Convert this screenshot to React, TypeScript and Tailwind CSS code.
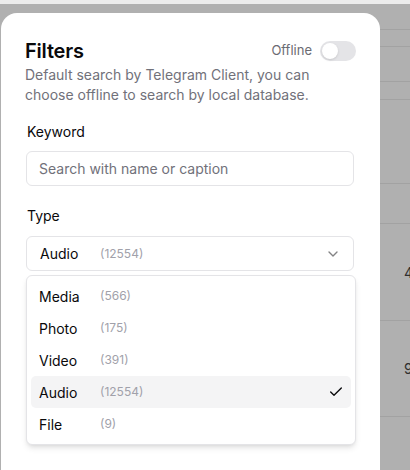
import React from 'react';
import { Check, ChevronDown } from 'lucide-react';

const types = [
  { name: 'Media', count: 566 },
  { name: 'Photo', count: 175 },
  { name: 'Video', count: 391 },
  { name: 'Audio', count: 12554 },
  { name: 'File', count: 9 },
];

/** 背景表格的右侧残留部分（被遮罩覆盖） */
function BackdropColumn() {
  const rows = [
    { h: 'h-[26px]', text: '' },
    { h: 'h-[17px]', text: '' },
    { h: 'h-[35px]', text: '' },
    { h: 'h-[18px]', text: '' },
    { h: 'h-[84px]', text: '' },
    { h: 'h-[40px]', text: '' },
    { h: 'h-[97px]', text: '4' },
    { h: 'h-[96px]', text: '9' },
  ];
  return (
    <div className="flex flex-col w-[30px] overflow-hidden">
      {rows.map((r, i) => (
        <div
          key={i}
          className={`${r.h} shrink-0 border-b border-[#a2a2a2] flex items-center pl-[24px] text-[14px] text-[#2f2f2f]`}
        >
          {r.text}
        </div>
      ))}
    </div>
  );
}

export default function App() {
  const selected = 'Audio';
  return (
    <div
      className="w-[410px] h-[470px] overflow-hidden bg-[#b0b0b0] flex flex-col"
      style={{ fontFamily: 'Inter, "Noto Sans", sans-serif' }}
    >
      <div className="h-1 shrink-0 bg-[#ececec]" />
      <div className="flex flex-1">
        {/* 过滤器弹窗 */}
        <div className="w-[380px] pt-[9px] pl-px">
          <div className="h-full rounded-t-2xl bg-white pl-6 pr-[26px] pt-6">
            <div className="flex items-center justify-between h-7 -mr-[2px]">
              <h2 className="text-[20px] font-semibold text-[#09090b] tracking-[-0.01em]">Filters</h2>
              <div className="flex items-center gap-2">
                <span className="text-[13px] text-[#6b6b73]">Offline</span>
                <div className="w-9 h-5 rounded-full bg-[#e4e4e7] p-[2px] flex items-center">
                  <div className="w-4 h-4 rounded-full bg-white shadow" />
                </div>
              </div>
            </div>
            <p className="text-[14px] leading-5 text-[#71717a]">
              Default search by Telegram Client, you can choose offline to search by local database.
            </p>

            <div className="pl-px">
              <label className="block mt-[17px] text-[14px] leading-5 font-normal text-[#09090b] pl-px">
                Keyword
              </label>
              <div className="mt-[9px] h-[35px] rounded-md border border-[#e4e4e7] flex items-center px-3 text-[14px] text-[#71717a]">
                Search with name or caption
              </div>

              <label className="block mt-5 text-[14px] leading-5 font-normal text-[#09090b] pl-px">
                Type
              </label>
              <div className="relative mt-[10px]">
                <div className="h-[35px] rounded-md border border-[#e4e4e7] flex items-center pl-[13px] pr-3">
                  <span className="w-[60px] text-[14px] text-[#09090b]">Audio</span>
                  <span className="text-[12px] text-[#a1a1aa]">(12554)</span>
                  <ChevronDown size={16} className="ml-auto text-[#09090b] opacity-50" />
                </div>

                {/* 下拉菜单 */}
                <div className="absolute left-0 -right-[2px] top-[39px] rounded-md border border-[#e4e4e7] bg-white p-1 shadow-md">
                  {types.map((t) => (
                    <div
                      key={t.name}
                      className={`relative h-8 flex items-center pl-2 rounded-[5px] ${
                        t.name === selected ? 'bg-[#f4f4f5]' : ''
                      }`}
                    >
                      <span className="w-[61px] text-[14px] text-[#09090b]">{t.name}</span>
                      <span className="text-[12px] text-[#a1a1aa]">({t.count})</span>
                      {t.name === selected && (
                        <Check size={16} className="absolute right-[7px] text-[#09090b]" />
                      )}
                    </div>
                  ))}
                </div>
              </div>
            </div>
          </div>
        </div>

        <BackdropColumn />
      </div>
    </div>
  );
}
